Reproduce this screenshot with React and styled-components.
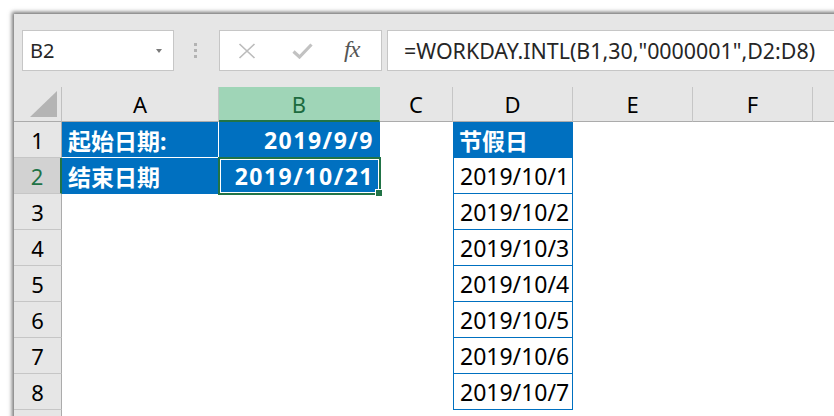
import React from 'react';
import styled, { createGlobalStyle } from 'styled-components';

const GlobalStyle = createGlobalStyle`
  html, body {
    margin: 0;
    padding: 0;
    background: #ffffff;
    overflow: hidden;
  }
  body {
    font-family: "Noto Sans", "Noto Sans CJK SC", sans-serif;
  }
`;

const Window = styled.div`
  margin: 14px 0 0 14px;
  width: 840px;
  height: 420px;
  background: #ffffff;
  box-shadow: -1px -1px 4px 1px rgba(0, 0, 0, 0.55);
  overflow: hidden;
`;

const Toolbar = styled.div`
  height: 73px;
  box-sizing: border-box;
  background: #e6e6e6;
  display: flex;
  align-items: center;
  padding-left: 8px;
`;

const NameBox = styled.div`
  width: 152px;
  height: 41px;
  box-sizing: border-box;
  background: #ffffff;
  border: 1px solid #c6c6c6;
  display: flex;
  align-items: center;
  justify-content: space-between;
  padding: 0 11px 0 7px;
  font-size: 20px;
  color: #262626;
`;

const Caret = styled.span`
  width: 0;
  height: 0;
  border-left: 3.5px solid transparent;
  border-right: 3.5px solid transparent;
  border-top: 4px solid #7a7a7a;
`;

const Grip = styled.div`
  display: flex;
  flex-direction: column;
  gap: 3px;
  margin: 0 22px 0 20px;
  & span {
    display: block;
    width: 3px;
    height: 3px;
    background: #b3b3b3;
  }
`;

const FuncBox = styled.div`
  width: 163px;
  height: 41px;
  box-sizing: border-box;
  background: #ffffff;
  border: 1px solid #c6c6c6;
  display: flex;
  align-items: center;
  padding-left: 18px;
`;

const FuncIcon = styled.div`
  width: ${p => p.$w}px;
  display: flex;
  align-items: center;
  justify-content: flex-start;
`;

const FxLabel = styled.span`
  font-family: "Liberation Serif", "DejaVu Serif", serif;
  font-style: italic;
  font-size: 24px;
  color: #555555;
  letter-spacing: -1px;
  margin-top: -2px;
`;

const FormulaBox = styled.div`
  flex: 1;
  height: 41px;
  box-sizing: border-box;
  margin-left: 5px;
  background: #ffffff;
  border: 1px solid #c6c6c6;
  border-right: none;
  display: flex;
  align-items: center;
  padding-left: 16px;
  font-size: 21.4px;
  color: #262626;
  white-space: nowrap;
`;

const Row = styled.div`
  display: flex;
  height: ${p => p.$h}px;
`;

const Corner = styled.div`
  width: 48px;
  flex: none;
  box-sizing: border-box;
  background: #e6e6e6;
  border-right: 1px solid #c0c0c0;
  border-bottom: 1px solid #ababab;
  display: flex;
  align-items: flex-end;
  justify-content: flex-end;
  padding: 0 4px 4px 0;
`;

const ColHeader = styled.div`
  width: ${p => p.$w}px;
  flex: none;
  box-sizing: border-box;
  background: ${p => (p.$active ? '#9fd5b7' : '#e6e6e6')};
  color: ${p => (p.$active ? '#1d6b3f' : '#000000')};
  border-right: 1px solid ${p => (p.$active ? '#9fd5b7' : '#c6c6c6')};
  border-bottom: ${p => (p.$active ? '2px solid #217346' : '1px solid #ababab')};
  display: flex;
  align-items: center;
  justify-content: center;
  font-size: 22px;
`;

const RowHeader = styled.div`
  width: 48px;
  flex: none;
  box-sizing: border-box;
  background: ${p => (p.$active ? '#d2d2d2' : '#e6e6e6')};
  color: ${p => (p.$active ? '#217346' : '#000000')};
  border-right: ${p => (p.$active ? '2px solid #217346' : '1px solid #ababab')};
  border-bottom: 1px solid #c6c6c6;
  display: flex;
  align-items: center;
  justify-content: center;
  font-size: 22px;
`;

const Cell = styled.div`
  position: relative;
  width: ${p => p.$w}px;
  flex: none;
  box-sizing: border-box;
  display: flex;
  align-items: center;
  justify-content: ${p => (p.$right ? 'flex-end' : 'flex-start')};
  padding: 0 ${p => (p.$right ? 6 : 7)}px 0 6px;
  background: ${p => (p.$fill ? '#0070c0' : 'transparent')};
  color: ${p => (p.$fill ? '#ffffff' : '#000000')};
  font-size: 23px;
  font-weight: ${p => (p.$bold ? 700 : 400)};
  letter-spacing: ${p => (p.$right ? '1.5px' : '0')};
  white-space: nowrap;
  border-right: ${p => p.$br || 'none'};
  border-bottom: ${p => p.$bb || 'none'};
  border-left: ${p => p.$bl || 'none'};
`;

const Selection = styled.div`
  position: absolute;
  left: -1px;
  top: -1px;
  right: -1px;
  bottom: -1px;
  border: 2px solid #217346;
  box-shadow: inset 0 0 0 1px #ffffff;
  pointer-events: none;
`;

const FillHandle = styled.div`
  position: absolute;
  right: -4px;
  bottom: -4px;
  width: 6px;
  height: 6px;
  background: #217346;
  border: 1px solid #ffffff;
`;

const COLS = [
  { key: 'A', w: 157 },
  { key: 'B', w: 161 },
  { key: 'C', w: 73 },
  { key: 'D', w: 120 },
  { key: 'E', w: 120 },
  { key: 'F', w: 120 },
  { key: 'G', w: 120 },
];

const WHITE = '1px solid #ffffff';
const BLUE = '1px solid #0070c0';

const holidays = [1, 2, 3, 4, 5, 6, 7].map(n => `2019/10/${n}`);

const cells = {
  A1: { text: '起始日期:', fill: true, bold: true, br: WHITE, bb: WHITE },
  B1: { text: '2019/9/9', fill: true, bold: true, right: true, bb: WHITE },
  A2: { text: '结束日期', fill: true, bold: true },
  B2: { text: '2019/10/21', fill: true, bold: true, right: true, selected: true },
  D1: { text: '节假日', fill: true, bold: true, bb: BLUE },
};
holidays.forEach((d, i) => {
  cells[`D${i + 2}`] = { text: d, bl: BLUE, br: BLUE, bb: BLUE };
});

const CrossIcon = () => (
  <svg width="18" height="16" viewBox="0 0 18 16">
    <path d="M1.5 1 L16.5 15 M16.5 1 L1.5 15" stroke="#bcbcbc" strokeWidth="1.7" fill="none" />
  </svg>
);

const CheckIcon = () => (
  <svg width="21" height="16" viewBox="0 0 21 16">
    <path d="M1.5 8.5 L7.5 14 L19.5 1.5" stroke="#c2c2c2" strokeWidth="3.2" fill="none" />
  </svg>
);

const CornerTriangle = () => (
  <svg width="27" height="26" viewBox="0 0 27 26">
    <polygon points="27,0 27,26 0,26" fill="#b4b4b4" />
  </svg>
);

const App = () => {
  const rows = [1, 2, 3, 4, 5, 6, 7, 8];
  return (
    <>
      <GlobalStyle />
      <Window>
        <Toolbar>
          <NameBox>
            <span>B2</span>
            <Caret />
          </NameBox>
          <Grip>
            <span />
            <span />
            <span />
          </Grip>
          <FuncBox>
            <FuncIcon $w={54}><CrossIcon /></FuncIcon>
            <FuncIcon $w={52}><CheckIcon /></FuncIcon>
            <FuncIcon $w={30}><FxLabel>fx</FxLabel></FuncIcon>
          </FuncBox>
          <FormulaBox>=WORKDAY.INTL(B1,30,"0000001",D2:D8)</FormulaBox>
        </Toolbar>

        <Row $h={35}>
          <Corner><CornerTriangle /></Corner>
          {COLS.map(c => (
            <ColHeader key={c.key} $w={c.w} $active={c.key === 'B'}>
              {c.key !== 'G' && c.key}
            </ColHeader>
          ))}
        </Row>

        {rows.map(r => (
          <Row key={r} $h={36}>
            <RowHeader $active={r === 2}>{r}</RowHeader>
            {COLS.map(c => {
              const cell = cells[`${c.key}${r}`] || {};
              return (
                <Cell
                  key={c.key}
                  $w={c.w}
                  $fill={cell.fill}
                  $bold={cell.bold}
                  $right={cell.right}
                  $br={cell.br}
                  $bb={cell.bb}
                  $bl={cell.bl}
                >
                  {cell.text}
                  {cell.selected && (
                    <Selection>
                      <FillHandle />
                    </Selection>
                  )}
                </Cell>
              );
            })}
          </Row>
        ))}
        <Row $h={36}>
          <RowHeader />
        </Row>
      </Window>
    </>
  );
};

export default App;
